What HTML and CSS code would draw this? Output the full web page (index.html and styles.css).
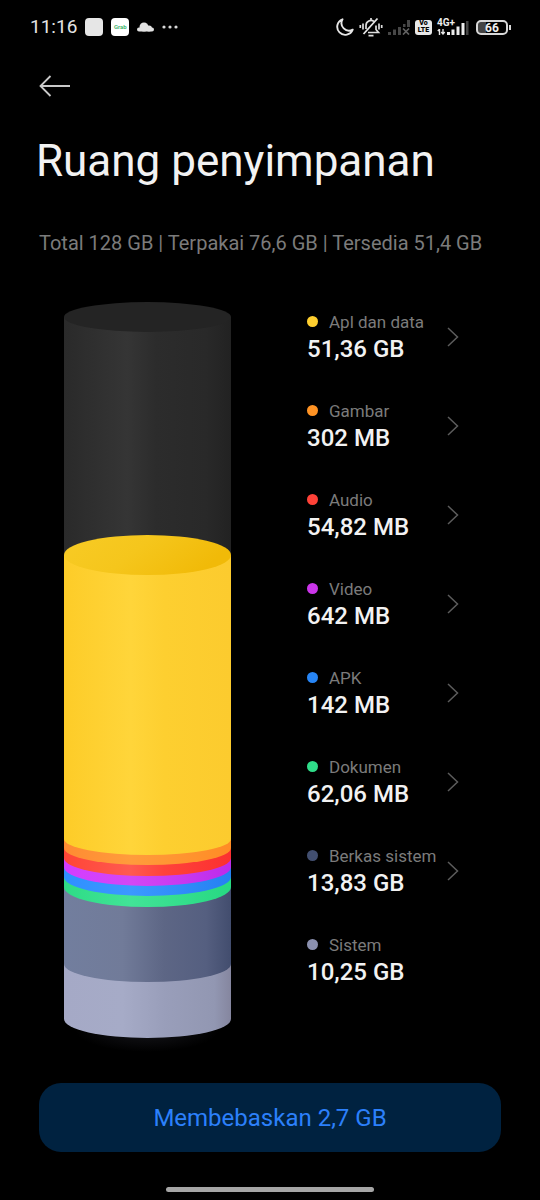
FILE: index.html
```html
<!DOCTYPE html>
<html lang="id">
<head>
<meta charset="utf-8">
<meta name="viewport" content="width=device-width, initial-scale=1">
<title>Ruang penyimpanan</title>
<link rel="stylesheet" href="styles.css">
</head>
<body>
<div class="screen">
  <div class="status">
    <div class="status-left">
      <span class="clock">11:16</span>
      <span class="app-tile"></span>
      <span class="app-tile app-grab">Grab</span>
      <svg class="cloud" width="17" height="10" viewBox="0 0 17 10" aria-hidden="true"><g fill="#e2e2e2"><circle cx="7" cy="5" r="4.500"/><circle cx="12" cy="6.500" r="3"/><rect x="0" y="5.500" width="17" height="4" rx="2"/></g></svg>
      <svg width="16" height="4" viewBox="0 0 16 4" aria-hidden="true"><g fill="#d8d8d8"><circle cx="2" cy="2" r="1.600"/><circle cx="8" cy="2" r="1.600"/><circle cx="14" cy="2" r="1.600"/></g></svg>
    </div>
    <div class="status-right">
      <svg width="18" height="18" viewBox="0 0 18 18" aria-hidden="true"><path d="M6.500 1.300A8 8 0 1 0 16.700 11.700 7.600 7.600 0 0 1 6.500 1.300z" fill="none" stroke="#e6e6e6" stroke-width="1.900" stroke-linejoin="round"/></svg>
      <svg width="24" height="20" viewBox="0 0 24 20" aria-hidden="true"><g fill="none" stroke="#dedede" stroke-width="1.700"><path d="M9 15.500h10.500l-2.500-3V8.500M15 4.500a5 5 0 0 0-8 4V12M12 3.500V1M9.500 18.700h5"/><path d="M4 6.500v6M1.300 8v3M20 6.500v6M22.700 8v3"/></g><path d="M4.500 17L18.500 1.500" stroke="#e6e6e6" stroke-width="1.800"/></svg>
      <svg class="signal-off" width="22" height="15" viewBox="0 0 22 15" aria-hidden="true"><g fill="#474747"><path d="M0 12h3v3H0zM5 9.500h3V15H5zM10 7h3v8h-3zM15 4h2.500v3H15zM19 0h3v7h-3z"/></g><path d="M15 8.500l6 6M21 8.500l-6 6" stroke="#626262" stroke-width="1.700"/></svg>
      <span class="volte"><span>Vo</span><span>LTE</span></span>
      <span class="network">
        <span class="network-type">4G+</span>
        <svg width="32" height="15" viewBox="0 0 32 15" aria-hidden="true"><path d="M2.500 15V9M0.800 11L2.500 9.200M6 9v5M4.300 12l1.700 2 1.700-2" fill="none" stroke="#e6e6e6" stroke-width="1.400"/><path d="M10 12h3v3h-3zM14.500 9.500h3V15h-3zM19.500 6.500h3V15h-3zM24.500 3h3v12h-3z" fill="#ededed"/><path d="M29 1h2.500v14H29z" fill="#444"/></svg>
      </span>
      <span class="battery"><span class="battery-level">66</span></span>
    </div>
  </div>

  <header class="header">
    <button class="back" type="button" aria-label="Kembali">
      <svg width="32" height="24" viewBox="0 0 32 24" aria-hidden="true"><path d="M31 12H2M11.500 2L1.500 12l10 10" fill="none" stroke="#c9c9c9" stroke-width="1.800"/></svg>
    </button>
    <h1 class="title">Ruang penyimpanan</h1>
    <p class="summary">Total 128 GB | Terpakai 76,6 GB | Tersedia 51,4 GB</p>
  </header>

  <main class="storage">
    <svg class="cylinder" width="167" height="750" viewBox="0 0 167 750" role="img" aria-label="Pemakaian ruang penyimpanan">
      <defs>
        <linearGradient id="dark"><stop offset="0" stop-color="#2a2a2a"/><stop offset=".38" stop-color="#353535"/><stop offset=".55" stop-color="#2c2c2c"/><stop offset=".85" stop-color="#292929"/><stop offset="1" stop-color="#222"/></linearGradient>
        <linearGradient id="yellow"><stop offset="0" stop-color="#fdcc28"/><stop offset=".4" stop-color="#ffd53a"/><stop offset=".6" stop-color="#fdcf30"/><stop offset="1" stop-color="#fccb2e"/></linearGradient>
        <linearGradient id="yellow-top" x1="0" y1="0" x2="1" y2=".3"><stop offset="0" stop-color="#f8cb25"/><stop offset=".5" stop-color="#f5c61c"/><stop offset="1" stop-color="#f1ba08"/></linearGradient>
        <linearGradient id="orange"><stop offset="0" stop-color="#ff8b32"/><stop offset=".4" stop-color="#ff9c3c"/><stop offset="1" stop-color="#ff8c25"/></linearGradient>
        <linearGradient id="red"><stop offset="0" stop-color="#ff4536"/><stop offset=".4" stop-color="#ff5a50"/><stop offset=".6" stop-color="#ff423b"/><stop offset="1" stop-color="#fb3030"/></linearGradient>
        <linearGradient id="purple"><stop offset="0" stop-color="#d43cff"/><stop offset=".4" stop-color="#d347f5"/><stop offset="1" stop-color="#bd2bea"/></linearGradient>
        <linearGradient id="blue"><stop offset="0" stop-color="#2f8fff"/><stop offset=".4" stop-color="#3b99ff"/><stop offset="1" stop-color="#2580f2"/></linearGradient>
        <linearGradient id="green"><stop offset="0" stop-color="#2edc86"/><stop offset=".4" stop-color="#42e397"/><stop offset="1" stop-color="#27d982"/></linearGradient>
        <linearGradient id="slate"><stop offset="0" stop-color="#727e9e"/><stop offset=".35" stop-color="#717b99"/><stop offset=".6" stop-color="#5d6685"/><stop offset=".85" stop-color="#555f80"/><stop offset="1" stop-color="#424d6e"/></linearGradient>
        <linearGradient id="silver"><stop offset="0" stop-color="#a5a9c6"/><stop offset=".35" stop-color="#a6abc7"/><stop offset=".6" stop-color="#999eba"/><stop offset=".9" stop-color="#9297b2"/><stop offset="1" stop-color="#85869f"/></linearGradient>
        <radialGradient id="glow"><stop offset="0" stop-color="#16161b"/><stop offset="1" stop-color="#000"/></radialGradient>
      </defs>
      <ellipse cx="83" cy="728" rx="72" ry="22" fill="url(#glow)"/>
      <path d="M0 15h167v250H0z" fill="url(#dark)"/>
      <ellipse cx="83.500" cy="15" rx="83.500" ry="15" fill="#242424"/>
      <path d="M0 253V717A83.500 19 0 0 0 167 717V253z" fill="url(#silver)"/>
      <path d="M0 253V662A83.500 18 0 0 0 167 662V253z" fill="url(#slate)"/>
      <path d="M0 253V585A83.500 20 0 0 0 167 585V253z" fill="url(#green)"/>
      <path d="M0 253V575A83.500 19 0 0 0 167 575V253z" fill="url(#blue)"/>
      <path d="M0 253V565A83.500 19 0 0 0 167 565V253z" fill="url(#purple)"/>
      <path d="M0 253V556A83.500 18 0 0 0 167 556V253z" fill="url(#red)"/>
      <path d="M0 253V546A83.500 17 0 0 0 167 546V253z" fill="url(#orange)"/>
      <path d="M0 253V537A83.500 16 0 0 0 167 537V253z" fill="url(#yellow)"/>
      <ellipse cx="83.500" cy="253" rx="83.500" ry="20" fill="url(#yellow-top)"/>
    </svg>

    <ul class="legend">
      <li><a class="item" href="#apps"><span class="dot dot-apps"></span><span class="label">Apl dan data</span><span class="value">51,36 GB</span><svg class="chevron" width="12" height="20" viewBox="0 0 12 20" aria-hidden="true"><path d="M1 1l9.500 9L1 19"/></svg></a></li>
      <li><a class="item" href="#images"><span class="dot dot-images"></span><span class="label">Gambar</span><span class="value">302 MB</span><svg class="chevron" width="12" height="20" viewBox="0 0 12 20" aria-hidden="true"><path d="M1 1l9.500 9L1 19"/></svg></a></li>
      <li><a class="item" href="#audio"><span class="dot dot-audio"></span><span class="label">Audio</span><span class="value">54,82 MB</span><svg class="chevron" width="12" height="20" viewBox="0 0 12 20" aria-hidden="true"><path d="M1 1l9.500 9L1 19"/></svg></a></li>
      <li><a class="item" href="#video"><span class="dot dot-video"></span><span class="label">Video</span><span class="value">642 MB</span><svg class="chevron" width="12" height="20" viewBox="0 0 12 20" aria-hidden="true"><path d="M1 1l9.500 9L1 19"/></svg></a></li>
      <li><a class="item" href="#apk"><span class="dot dot-apk"></span><span class="label">APK</span><span class="value">142 MB</span><svg class="chevron" width="12" height="20" viewBox="0 0 12 20" aria-hidden="true"><path d="M1 1l9.500 9L1 19"/></svg></a></li>
      <li><a class="item" href="#documents"><span class="dot dot-documents"></span><span class="label">Dokumen</span><span class="value">62,06 MB</span><svg class="chevron" width="12" height="20" viewBox="0 0 12 20" aria-hidden="true"><path d="M1 1l9.500 9L1 19"/></svg></a></li>
      <li><a class="item" href="#system-files"><span class="dot dot-files"></span><span class="label">Berkas sistem</span><span class="value">13,83 GB</span><svg class="chevron" width="12" height="20" viewBox="0 0 12 20" aria-hidden="true"><path d="M1 1l9.500 9L1 19"/></svg></a></li>
      <li><div class="item"><span class="dot dot-system"></span><span class="label">Sistem</span><span class="value">10,25 GB</span></div></li>
    </ul>
  </main>

  <footer class="footer">
    <button class="clean" type="button">Membebaskan 2,7 GB</button>
    <div class="home-bar"></div>
  </footer>
</div>
</body>
</html>
```
FILE: styles.css
```css
* {
  box-sizing: border-box;
}

body {
  margin: 0;
  background: #000;
  color: #f2f2f2;
  font-family: Roboto, "Liberation Sans", sans-serif;
}

.screen {
  min-height: 100vh;
  display: flex;
  flex-direction: column;
}

.status {
  display: flex;
  justify-content: space-between;
  align-items: center;
  height: 54px;
  padding: 0 32px 0 30px;
}

.status-left,
.status-right {
  display: flex;
  align-items: center;
}

.status-left {
  gap: 8px;
}

.status-right {
  gap: 5px;
}

.clock {
  font-size: 19px;
  line-height: 24px;
  color: #e4e4e4;
}

.app-tile {
  width: 18px;
  height: 18px;
  border-radius: 4px;
  background: #e6e6e6;
}

.app-grab {
  background: #fff;
  color: #1fae5b;
  font-size: 6px;
  line-height: 18px;
  font-weight: 500;
  text-align: center;
}

.volte {
  display: flex;
  flex-direction: column;
  align-items: center;
  width: 17px;
  height: 15px;
  border-radius: 3px;
  background: #e8e8e8;
  color: #000;
  font-size: 7px;
  line-height: 7px;
  font-weight: 900;
}

.network {
  position: relative;
  display: flex;
}

.network-type {
  position: absolute;
  left: 0;
  top: -2px;
  color: #ededed;
  font-size: 10px;
  line-height: 9px;
  font-weight: 700;
}

.battery {
  position: relative;
  margin-left: 2px;
}

.battery-level {
  display: block;
  width: 32px;
  height: 15px;
  border: 2px solid #d8d8d8;
  border-radius: 5px;
  background: linear-gradient(90deg, #444 30%, #000 30%);
  color: #ededed;
  font-size: 12px;
  line-height: 12px;
  font-weight: 700;
  text-align: center;
}

.battery::after {
  content: "";
  position: absolute;
  left: 33px;
  top: 5px;
  width: 2px;
  height: 5px;
  background: #d8d8d8;
}

.header {
  padding: 20px 36px 0;
}

.back {
  display: block;
  margin: 0 0 0 3px;
  padding: 0;
  border: 0;
  background: none;
}

.back svg {
  display: block;
}

.title {
  margin: 36px 0 0;
  font-size: 44px;
  line-height: 54px;
  font-weight: 400;
}

.summary {
  margin: 43px 0 0 3px;
  color: #7b7b7b;
  font-size: 20px;
  line-height: 24px;
}

.storage {
  display: flex;
  justify-content: space-between;
  padding: 47px 81px 0 64px;
}

.cylinder {
  flex: none;
}

.legend {
  display: grid;
  gap: 35px;
  align-content: start;
  width: 152px;
  margin: 0;
  padding: 8px 0 0;
  list-style: none;
}

.item {
  display: grid;
  grid-template-columns: 22px 1fr;
  grid-template-rows: 24px 30px;
  align-items: center;
  position: relative;
  color: inherit;
  text-decoration: none;
}

.dot {
  width: 11px;
  height: 11px;
  margin-bottom: 2px;
  border-radius: 50%;
}

.dot-apps { background: #ffcf2f; }
.dot-images { background: #ff9324; }
.dot-audio { background: #ff4238; }
.dot-video { background: #cb35ea; }
.dot-apk { background: #2785f5; }
.dot-documents { background: #2fdc89; }
.dot-files { background: #424f70; }
.dot-system { background: #8b90af; }

.label {
  color: #7b7b7b;
  font-size: 17px;
  line-height: 24px;
  white-space: nowrap;
}

.value {
  grid-column: 1 / -1;
  font-size: 24px;
  line-height: 30px;
  font-weight: 500;
}

.chevron {
  position: absolute;
  right: 0;
  top: 17px;
  fill: none;
  stroke: #5c5c5c;
  stroke-width: 1.5;
}

.footer {
  margin-top: auto;
  padding: 0 39px 8px;
}

.clean {
  display: block;
  width: 100%;
  padding: 20px 16px 18px;
  border: 0;
  border-radius: 22px;
  background: #002240;
  color: #2c80fb;
  font-family: inherit;
  font-size: 24px;
  line-height: 31px;
  font-weight: 400;
}

.home-bar {
  width: 45%;
  height: 5px;
  margin: 35px auto 0;
  border-radius: 3px;
  background: #a6a6a6;
}
```
